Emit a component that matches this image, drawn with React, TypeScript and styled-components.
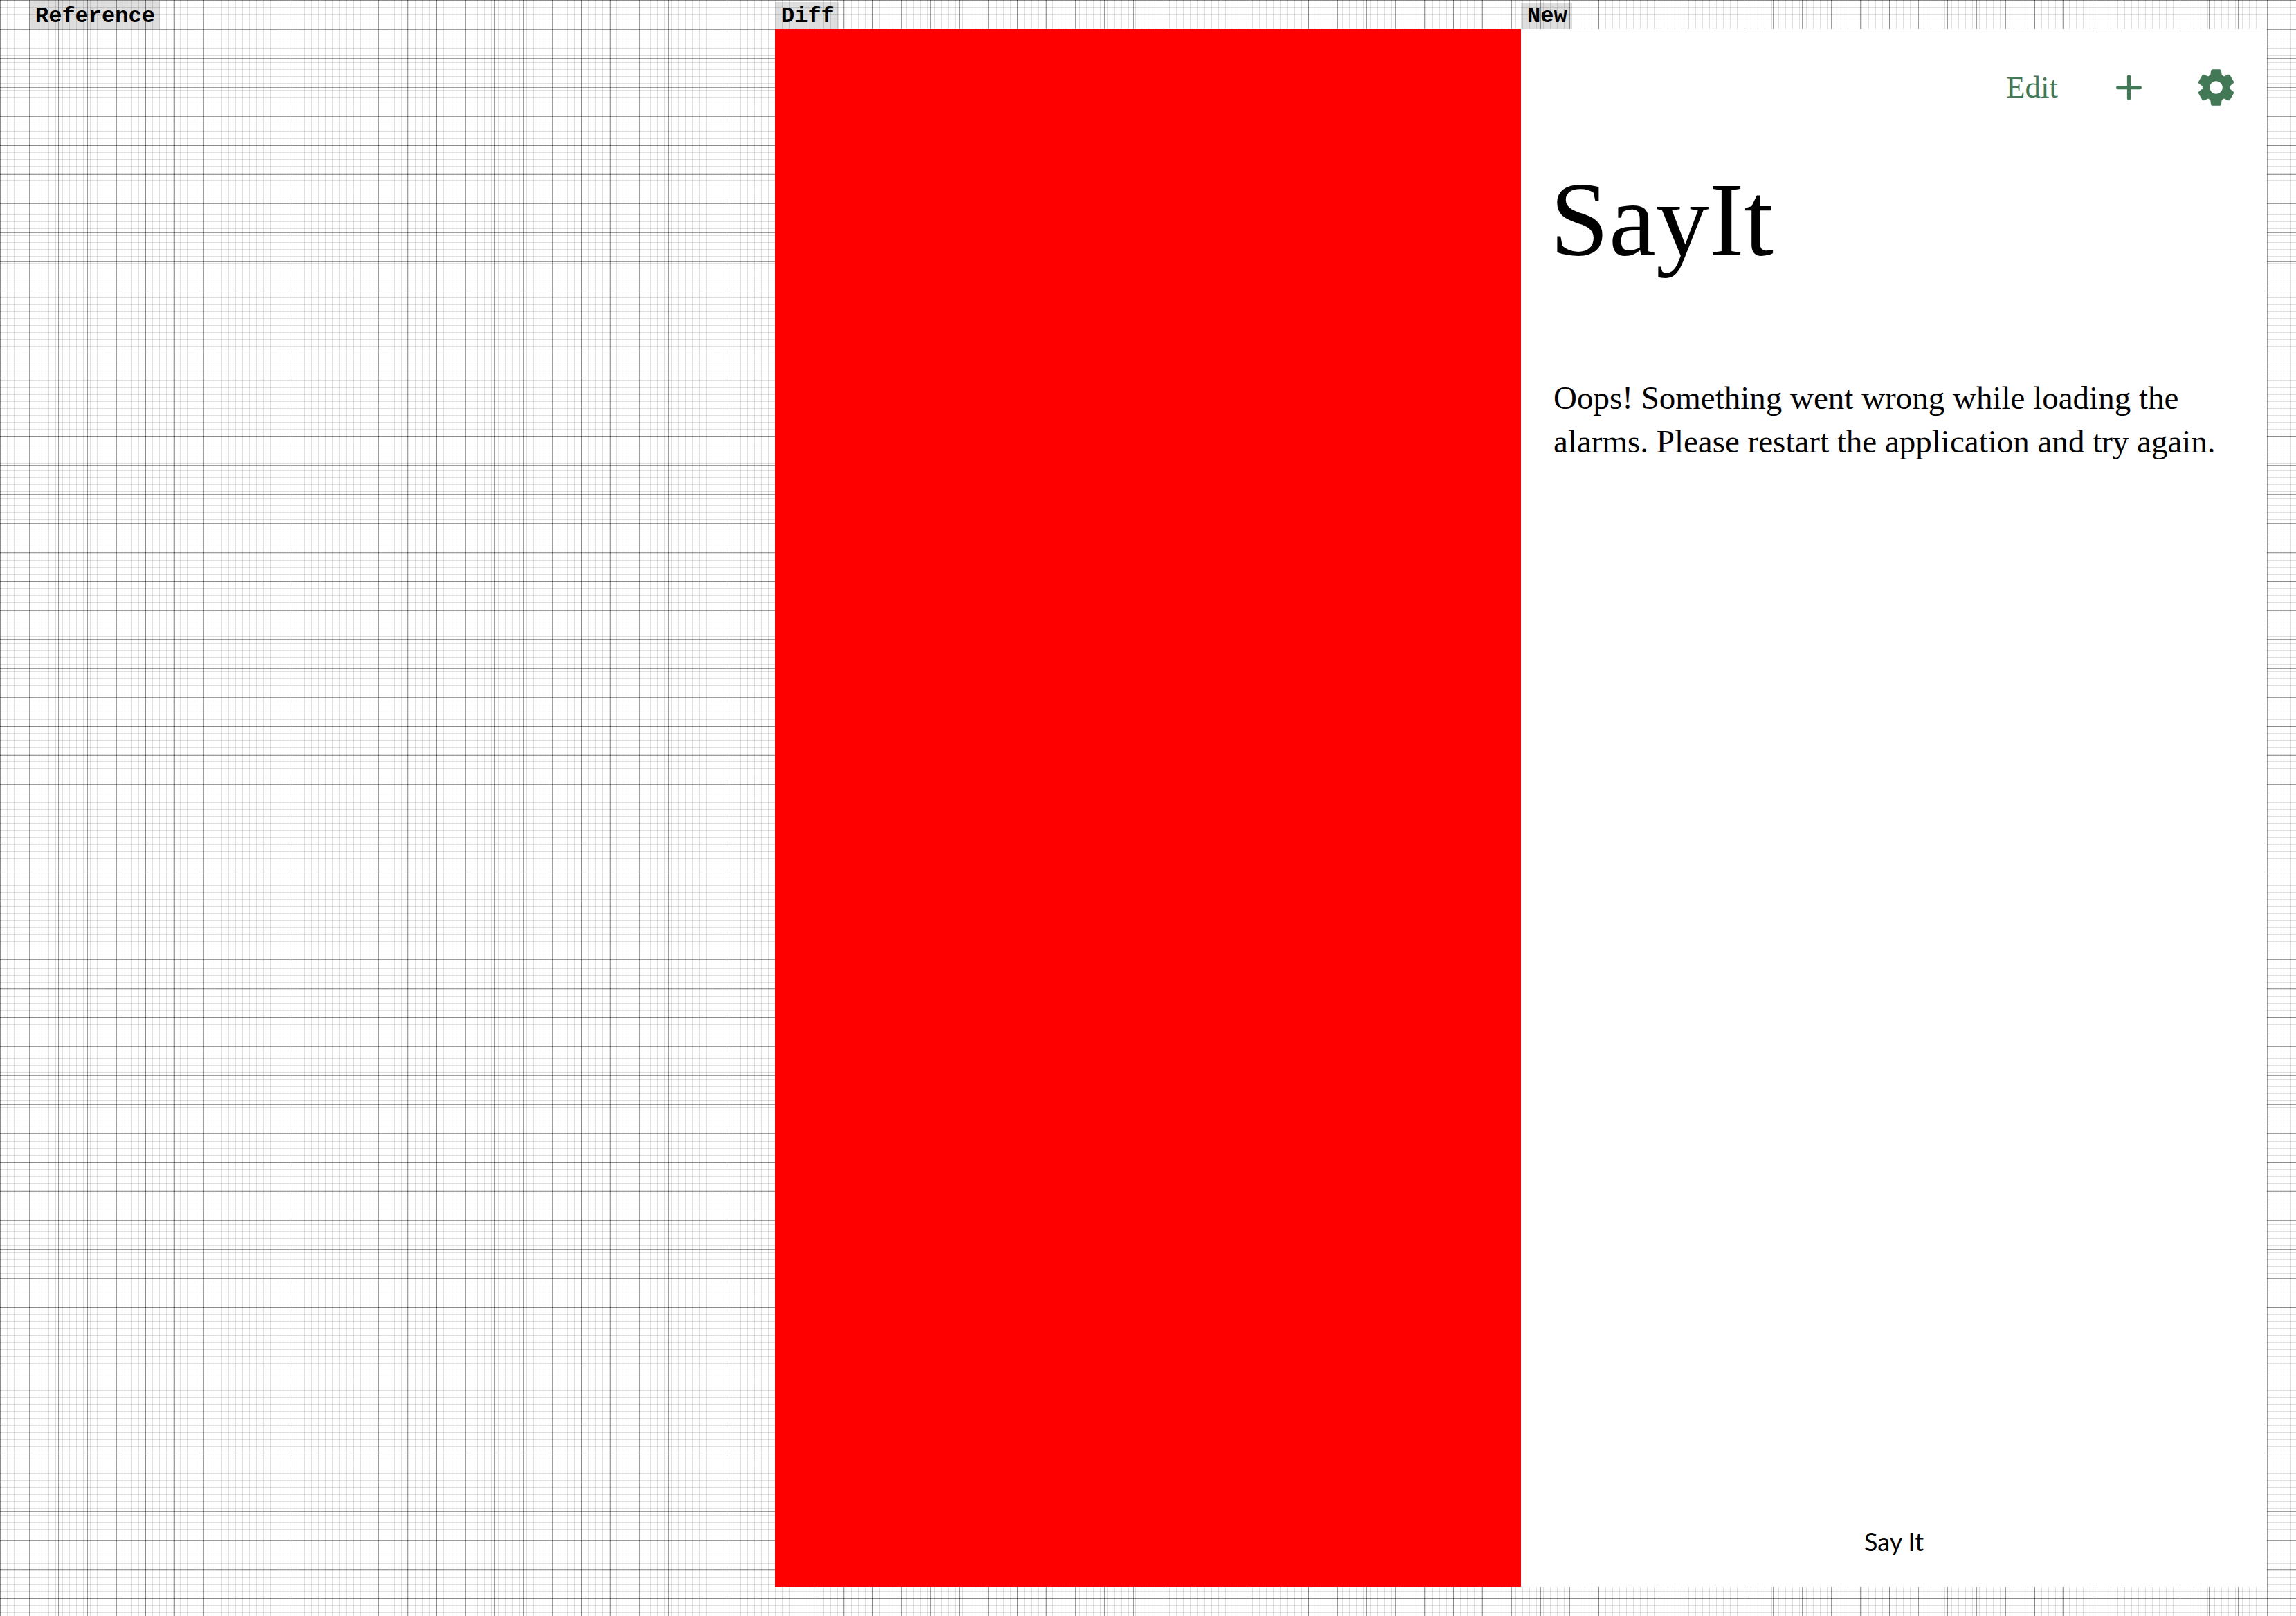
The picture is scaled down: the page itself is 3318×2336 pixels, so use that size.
import React from "react";
import styled, { createGlobalStyle } from "styled-components";

const GlobalStyle = createGlobalStyle`
  * { box-sizing: border-box; }
  body { margin: 0; background: #fff; }
`;

const Page = styled.main`
  min-height: 100vh;
  padding: 0 42px 42px;
  display: grid;
  grid-template-columns: repeat(3, minmax(0, 1fr));
  background-color: #fff;
  background-image:
    linear-gradient(rgba(0, 0, 0, 0.38) 1px, transparent 1px),
    linear-gradient(90deg, rgba(0, 0, 0, 0.38) 1px, transparent 1px),
    linear-gradient(rgba(0, 0, 0, 0.12) 1px, transparent 1px),
    linear-gradient(90deg, rgba(0, 0, 0, 0.12) 1px, transparent 1px);
  background-size: 42px 42px, 42px 42px, 10px 10px, 10px 10px;
`;

const Column = styled.section`
  display: flex;
  flex-direction: column;
`;

const LabelRow = styled.header`
  height: 42px;
  display: flex;
  align-items: flex-end;
`;

const Label = styled.h2<{ $height: number }>`
  margin: 0;
  height: ${(p) => p.$height}px;
  padding: 0 7px 0 9px;
  display: flex;
  align-items: flex-end;
  background: rgba(0, 0, 0, 0.13);
  color: #000;
  font: 700 32px/36px "Liberation Mono", monospace;
`;

const Panel = styled.div<{ $fill: string }>`
  flex: 1;
  display: flex;
  flex-direction: column;
  background: ${(p) => p.$fill};
`;

const Toolbar = styled.nav`
  height: 168px;
  padding: 0 42px;
  display: flex;
  align-items: center;
  justify-content: flex-end;
  gap: 63px;
`;

const ToolButton = styled.button`
  margin: 0;
  padding: 0;
  border: 0;
  display: flex;
  background: none;
  color: #437857;
  cursor: pointer;
`;

const TextButton = styled(ToolButton)`
  padding: 0 8px;
  font: 45px/60px "Liberation Serif", serif;
`;

const Icon = styled.svg`
  width: 63px;
  height: 63px;
  fill: currentColor;
`;

const Title = styled.h1`
  margin: 0;
  padding: 2px 42px 0;
  color: #000;
  font: 400 153px/212px "Liberation Serif", serif;
`;

const Message = styled.p`
  margin: 120px 0 0;
  padding: 0 47px;
  color: #000;
  font: 47px/63px "Liberation Serif", serif;
`;

const Footer = styled.footer`
  margin-top: auto;
  padding-bottom: 42px;
  color: #000;
  text-align: center;
  font: 36px/48px Lato, sans-serif;
`;

export default function App() {
  return (
    <>
      <GlobalStyle />
      <Page>
        <Column>
          <LabelRow>
            <Label $height={40}>Reference</Label>
          </LabelRow>
        </Column>
        <Column>
          <LabelRow>
            <Label $height={39}>Diff</Label>
          </LabelRow>
          <Panel $fill="#ff0000" />
        </Column>
        <Column>
          <LabelRow>
            <Label $height={38}>New</Label>
          </LabelRow>
          <Panel $fill="#ffffff">
            <Toolbar>
              <TextButton type="button">Edit</TextButton>
              <ToolButton type="button" aria-label="Add alarm">
                <Icon viewBox="0 0 24 24">
                  <path d="M18 13h-5v5c0 .55-.45 1-1 1s-1-.45-1-1v-5H6c-.55 0-1-.45-1-1s.45-1 1-1h5V6c0-.55.45-1 1-1s1 .45 1 1v5h5c.55 0 1 .45 1 1s-.45 1-1 1z" />
                </Icon>
              </ToolButton>
              <ToolButton type="button" aria-label="Settings">
                <Icon viewBox="0 0 24 24">
                  <path d="M19.5 12c0-.23-.01-.45-.03-.68l1.86-1.41c.4-.3.51-.86.26-1.3l-1.87-3.23c-.25-.44-.79-.62-1.25-.42l-2.15.91c-.37-.26-.76-.49-1.17-.68l-.29-2.31c-.06-.5-.49-.88-.99-.88h-3.73c-.51 0-.94.38-1 .88l-.29 2.31c-.41.19-.8.42-1.17.68l-2.15-.91c-.46-.2-1-.02-1.25.42L2.41 8.62c-.25.44-.14.99.26 1.3l1.86 1.41c-.02.22-.03.44-.03.67s.01.45.03.68l-1.86 1.41c-.4.3-.51.86-.26 1.3l1.87 3.23c.25.44.79.62 1.25.42l2.15-.91c.37.26.76.49 1.17.68l.29 2.31c.06.5.49.88.99.88h3.73c.5 0 .93-.38.99-.88l.29-2.31c.41-.19.8-.42 1.17-.68l2.15.91c.46.2 1 .02 1.25-.42l1.87-3.23c.25-.44.14-.99-.26-1.3l-1.86-1.41c.03-.23.04-.45.04-.68zm-7.46 3.5c-1.93 0-3.5-1.57-3.5-3.5s1.57-3.5 3.5-3.5 3.5 1.57 3.5 3.5-1.57 3.5-3.5 3.5z" />
                </Icon>
              </ToolButton>
            </Toolbar>
            <Title>SayIt</Title>
            <Message>
              Oops! Something went wrong while loading the alarms. Please restart the application and try again.
            </Message>
            <Footer>Say It</Footer>
          </Panel>
        </Column>
      </Page>
    </>
  );
}
